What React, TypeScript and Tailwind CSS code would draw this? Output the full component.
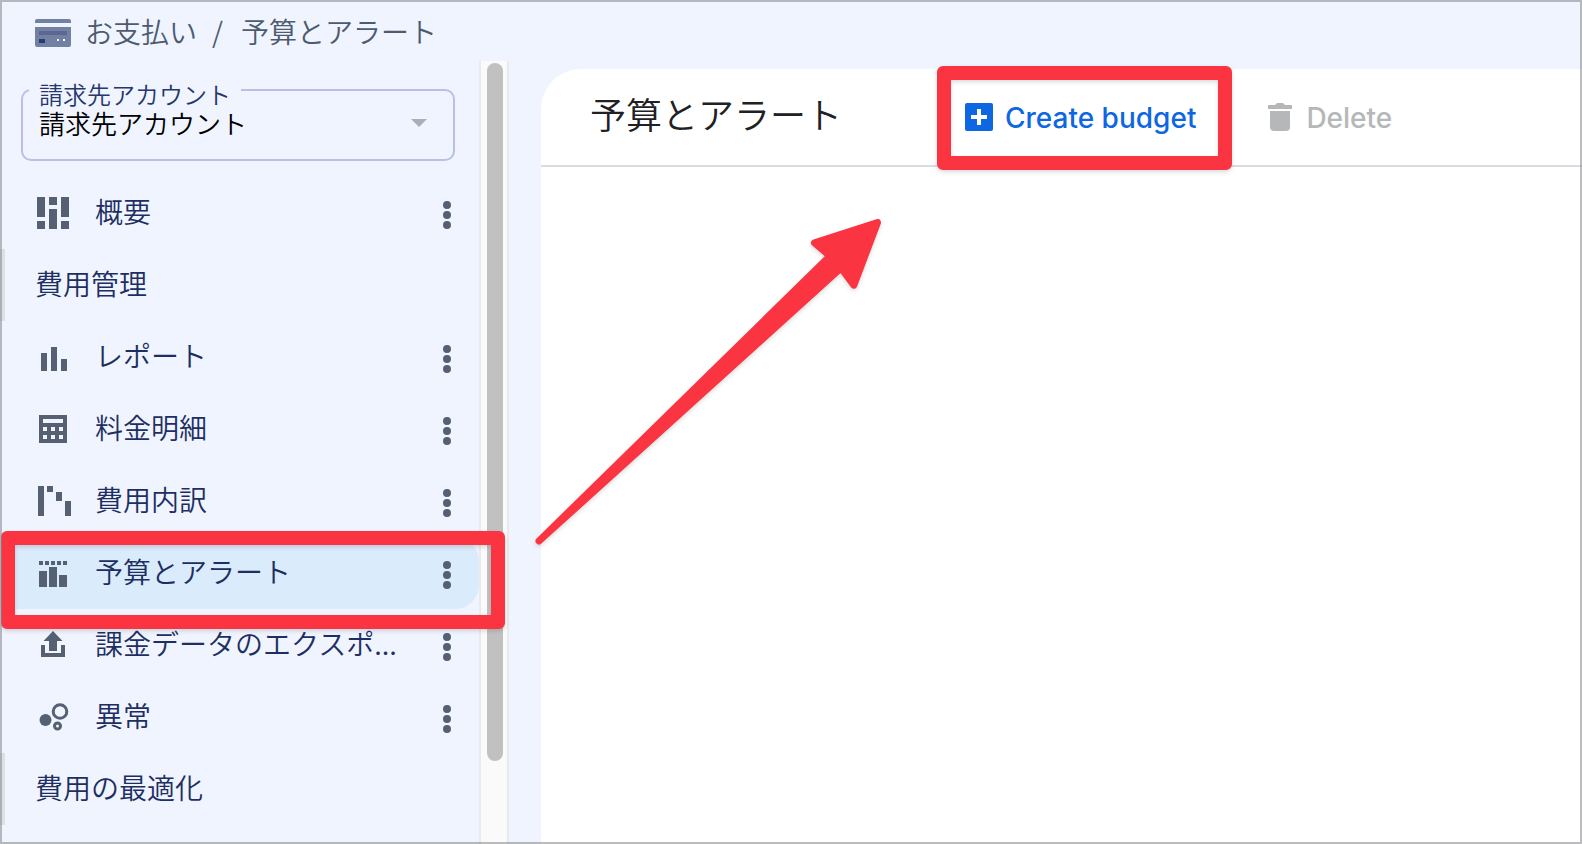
import type { ReactNode } from "react";

type NavEntry =
  | { kind: "group"; label: string }
  | { kind: "item"; label: string; icon: ReactNode; active?: boolean };

const OverviewIcon = () => (
  <svg viewBox="0 0 36 36" className="size-9 shrink-0 fill-[#556072]" aria-hidden="true">
    <path d="M2 2h8v20H2zM2 26h8v8H2zM14 2h8v8h-8zM14 14h8v20h-8zM26 2h8v20h-8zM26 26h8v8h-8z" />
  </svg>
);

const ReportIcon = () => (
  <svg viewBox="0 0 36 36" className="size-9 shrink-0 fill-[#556072]" aria-hidden="true">
    <path d="M6 14h6v18H6zM16 8h6v24h-6zM26 20h6v12h-6z" />
  </svg>
);

const PricingIcon = () => (
  <svg viewBox="0 0 36 36" className="size-9 shrink-0 fill-[#556072]" aria-hidden="true">
    <path
      fillRule="evenodd"
      d="M4 4h28v28H4zM8 8v4h20V8zM8 16v4h4v-4zM16 16v4h4v-4zM24 16v4h4v-4zM8 24v4h4v-4zM16 24v4h4v-4zM24 24v4h4v-4z"
    />
  </svg>
);

const BreakdownIcon = () => (
  <svg viewBox="0 0 36 36" className="size-9 shrink-0 fill-[#556072]" aria-hidden="true">
    <path d="M3 3h6v30H3zM12 3h6v6h-6zM21 9h6v9h-6zM30 18h6v15h-6z" />
  </svg>
);

const BudgetIcon = () => (
  <svg viewBox="0 0 36 36" className="size-9 shrink-0 fill-[#556072]" aria-hidden="true">
    <path d="M4 6h4v4H4zM10 6h4v4h-4zM16 6h4v4h-4zM22 6h4v4h-4zM28 6h4v4h-4zM4 16h8v16H4zM14 12h8v20h-8zM24 20h8v12h-8z" />
  </svg>
);

const ExportIcon = () => (
  <svg viewBox="0 0 36 36" className="size-9 shrink-0 fill-[#556072]" aria-hidden="true">
    <path d="M18 4l9.5 10H22v10h-8V14H8.500zM6 18h4v8h16v-8h4v12H6z" />
  </svg>
);

const AnomalyIcon = () => (
  <svg viewBox="0 0 36 36" className="size-9 shrink-0 fill-none stroke-[#556072]" aria-hidden="true">
    <circle cx="10.500" cy="21" r="6" className="fill-[#556072] stroke-none" />
    <circle cx="25" cy="12.500" r="6.800" strokeWidth="3" />
    <circle cx="22.500" cy="27" r="3" strokeWidth="3" />
  </svg>
);

const CardIcon = () => (
  <svg viewBox="0 0 36 28" className="h-7 w-9 shrink-0" aria-hidden="true">
    <path d="M2 0h32a2 2 0 0 1 2 2v2H0V2a2 2 0 0 1 2-2zM0 8h36v18a2 2 0 0 1-2 2H2a2 2 0 0 1-2-2z" fill="#7280a3" />
    <path d="M4 12h28v4H4z" fill="#5b6790" />
    <path d="M4 20h6v4H4z" fill="#233e72" />
    <path d="M22 20h2v2h-2zM28 20h2v2h-2z" fill="#fff" />
  </svg>
);

const AddBoxIcon = () => (
  <svg viewBox="0 0 28 28" className="size-7 shrink-0" aria-hidden="true">
    <rect width="28" height="28" rx="2" fill="#0d67e2" />
    <path d="M12 6h4v6h6v4h-6v6h-4v-6H6v-4h6z" fill="#fff" />
  </svg>
);

const TrashIcon = () => (
  <svg viewBox="0 0 24 28" className="h-7 w-6 shrink-0 fill-[#b5b7b8]" aria-hidden="true">
    <path d="M7 2l2-2h6l2 2h7v4H0V2zM2 8h20v16a4 4 0 0 1-4 4H6a4 4 0 0 1-4-4z" />
  </svg>
);

const MoreIcon = () => (
  <svg viewBox="0 0 8 28" className="h-7 w-2 fill-[#556072]" aria-hidden="true">
    <circle cx="4" cy="4" r="4" />
    <circle cx="4" cy="14" r="4" />
    <circle cx="4" cy="24" r="4" />
  </svg>
);

const entries: NavEntry[] = [
  { kind: "item", label: "概要", icon: <OverviewIcon /> },
  { kind: "group", label: "費用管理" },
  { kind: "item", label: "レポート", icon: <ReportIcon /> },
  { kind: "item", label: "料金明細", icon: <PricingIcon /> },
  { kind: "item", label: "費用内訳", icon: <BreakdownIcon /> },
  { kind: "item", label: "予算とアラート", icon: <BudgetIcon />, active: true },
  { kind: "item", label: "課金データのエクスポ...", icon: <ExportIcon /> },
  { kind: "item", label: "異常", icon: <AnomalyIcon /> },
  { kind: "group", label: "費用の最適化" },
];

const Highlight = ({ className }: { className: string }) => (
  <span className={`pointer-events-none absolute z-10 drop-shadow-[0_2px_2px_rgba(0,0,0,0.14)] ${className}`}>
    <span className="block size-full rounded-md border-14 border-[#fa3441]" />
  </span>
);

function AccountSelect() {
  return (
    <div className="relative mt-7 mr-6 ml-[21px] h-[72px] rounded-[10px] border-2 border-[#b7c2e2]">
      <label
        htmlFor="account"
        className="absolute -top-[13px] left-1.5 bg-[#f0f4ff] pr-2.5 pl-2.5 text-2xl leading-8 text-[#26376b]"
      >
        請求先アカウント
      </label>
      <select
        id="account"
        className="relative mt-[11px] block h-10 w-full appearance-none bg-transparent pl-4 text-[26px] text-black outline-none"
      >
        <option>請求先アカウント</option>
      </select>
      <svg
        viewBox="0 0 16 8"
        className="pointer-events-none absolute top-7 right-[26px] h-2 w-4 fill-[#abaeb6]"
        aria-hidden="true"
      >
        <path d="M0 0h16L8 8z" />
      </svg>
    </div>
  );
}

function Sidebar() {
  return (
    <aside className="w-[479px] shrink-0">
      <AccountSelect />
      <nav className="mt-4 pb-[17px]">
        <ul>
          {entries.map((entry) =>
            entry.kind === "group" ? (
              <li
                key={entry.label}
                className="flex h-[72px] items-center border-l-5 border-[#dbdfe7] pb-1 pl-[30px] text-[28px] text-[#1d2f62]"
              >
                {entry.label}
              </li>
            ) : (
              <li
                key={entry.label}
                className={`relative flex h-[72px] items-center pr-7 pl-[35px] ${
                  entry.active ? "rounded-r-3xl bg-[#daebfc]" : ""
                }`}
              >
                <a
                  href="#"
                  aria-current={entry.active ? "page" : undefined}
                  className="flex min-w-0 flex-1 items-center gap-6 text-[28px] text-[#1d2f62]"
                >
                  {entry.icon}
                  <span className="pb-1 whitespace-nowrap">{entry.label}</span>
                </a>
                <button type="button" aria-label={`${entry.label}のメニュー`} className="mt-1">
                  <MoreIcon />
                </button>
                {entry.active && <Highlight className="-top-1.5 -right-[26px] -bottom-5 left-px" />}
              </li>
            ),
          )}
        </ul>
      </nav>
    </aside>
  );
}

export default function App() {
  return (
    <div
      lang="ja"
      className="relative flex min-h-screen flex-col overflow-hidden bg-[#f0f4ff] font-['Noto_Sans_CJK_JP',sans-serif] font-[350]"
    >
      <header className="flex h-[61px] items-center pt-1 pl-[35px] text-[28px] text-[#4d5b70]">
        <CardIcon />
        <nav className="flex items-center pb-1 pl-3.5">
          <a href="#">お支払い</a>
          <span className="pr-[18px] pl-[15px]">/</span>
          <span>予算とアラート</span>
        </nav>
      </header>

      <div className="flex flex-1">
        <Sidebar />
        <div className="mr-8 w-[30px] shrink-0 border-x-2 border-[#e9eaec] bg-[#fafafa] px-1.5 pt-0.5">
          <div className="h-[698px] w-4 rounded-full bg-[#c1c1c1]" />
        </div>

        <main className="relative mt-2 min-w-0 flex-1 rounded-tl-[40px] bg-white">
          <div className="flex h-[98px] items-center border-b-2 border-[#dadce0] pl-[49px]">
            <h1 className="w-[375px] shrink-0 pb-2 text-4xl text-[#202124]">予算とアラート</h1>
            <div className="flex items-center gap-[72px] font-[Inter,sans-serif] text-[28px] leading-10 font-medium">
              <button type="button" className="relative flex items-center gap-3 text-[#0d67e2]">
                <AddBoxIcon />
                <span className="pt-0.5">Create budget</span>
                <Highlight className="-top-[30px] -right-9 -bottom-8 -left-7" />
              </button>
              <button type="button" disabled className="flex items-center gap-3.5 text-[#b5b7b8]">
                <TrashIcon />
                <span className="pt-0.5">Delete</span>
              </button>
            </div>
          </div>
          <svg
            viewBox="530 210 360 340"
            className="pointer-events-none absolute top-[141px] -left-[11px] h-[340px] w-[360px] overflow-visible drop-shadow-[0_2px_2px_rgba(0,0,0,0.14)]"
            aria-hidden="true"
          >
            <path
              d="M539 541L830 256L814.500 242.800L877.500 222.500L853.800 285.200L841 268Z"
              fill="#fa3441"
              stroke="#fa3441"
              strokeWidth="7"
              strokeLinejoin="round"
            />
          </svg>
        </main>
      </div>

      <div className="pointer-events-none absolute inset-0 z-20 border-2 border-[#85858a]/55" />
    </div>
  );
}
